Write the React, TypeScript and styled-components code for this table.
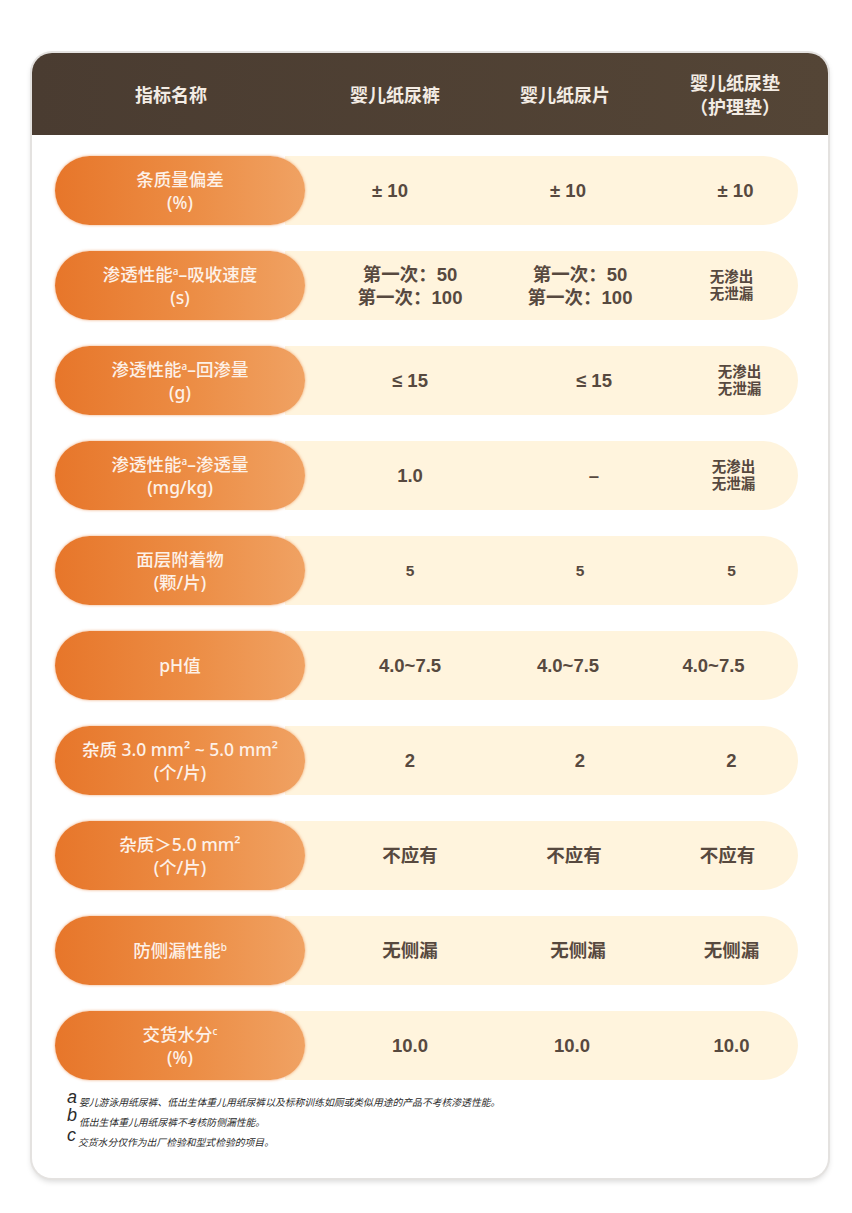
import React from 'react'
import styled, { createGlobalStyle } from 'styled-components'

const GlobalStyle = createGlobalStyle`
  html, body {
    margin: 0;
    padding: 0;
    background: #ffffff;
  }
  body {
    font-family: "Liberation Sans", "Noto Sans CJK SC", sans-serif;
  }
`

// styled
const Page = styled.div`
  width: 852px;
  height: 1213px;
  padding: 53px 24px 0 32px;
  box-sizing: border-box;
`
const Card = styled.div`
  width: 796px;
  height: 1125px;
  border-radius: 20px;
  background: #ffffff;
  box-shadow: 0 0 0 2px #e4e2e0, 0 3px 6px rgba(0, 0, 0, 0.18);
  overflow: hidden;
  display: flex;
  flex-direction: column;
`
const Header = styled.div`
  display: grid;
  grid-template-columns: 278px 170px 170px 170px;
  align-items: center;
  height: 82px;
  background: linear-gradient(90deg, #4a3c31 0%, #544536 100%);
`
const HeadCell = styled.div`
  text-align: center;
  color: #f3ece4;
  font-family: "Noto Sans CJK SC", sans-serif;
  font-weight: 700;
  font-size: 18px;
  line-height: 24px;
`
const Body = styled.div`
  display: flex;
  flex-direction: column;
  gap: 26px;
  padding: 21px 30px 0 23px;
`
const Row = styled.div`
  display: flex;
  height: 69px;
`
const Label = styled.div`
  position: relative;
  z-index: 1;
  width: 250px;
  flex-shrink: 0;
  border-radius: 35px;
  background: linear-gradient(90deg, #e7762a 0%, #ec8d45 55%, #f0a263 100%);
  box-shadow: 0 0 3px rgba(232, 130, 60, 0.7);
  display: flex;
  justify-content: center;
  align-items: center;
`
const LabelText = styled.div`
  color: #fdf1e8;
  font-family: "Noto Sans", "Noto Sans CJK SC", sans-serif;
  font-weight: 500;
  font-size: 17.5px;
  line-height: 23px;
  text-align: center;
  white-space: nowrap;
  sup {
    font-size: 10px;
    line-height: 0;
    vertical-align: 6px;
  }
`
const Bar = styled.div`
  flex: 1;
  margin-left: -20px;
  padding-left: 40px;
  border-radius: 0 35px 35px 0;
  background: #fff4dd;
  display: grid;
  grid-template-columns: 170px 170px 1fr;
  align-items: center;
`
const Value = styled.div<{ size?: number; shift?: number }>`
  text-align: center;
  color: #57493f;
  font-family: "Liberation Sans", "Noto Sans CJK SC", sans-serif;
  font-weight: 700;
  font-size: ${({ size }) => size || 18.5}px;
  line-height: ${({ size }) => (size && size < 16 ? '17px' : '23px')};
  transform: translateX(${({ shift }) => shift || 0}px);
  white-space: nowrap;
`
const Notes = styled.div`
  padding: 14px 0 0 35px;
  display: flex;
  flex-direction: column;
  gap: 4px;
`
const Note = styled.div`
  display: flex;
  align-items: flex-end;
  font-family: "Noto Sans CJK SC", sans-serif;
  font-style: italic;
  font-size: 9.8px;
  color: #2b2b2b;
  line-height: 16px;
`
const NoteMark = styled.span<{ lift: number }>`
  font-family: "Liberation Sans", sans-serif;
  font-style: italic;
  font-size: 18px;
  line-height: 16px;
  margin-right: 2px;
  transform: translateY(-${({ lift }) => lift}px);
  display: inline-block;
`

interface RowData {
  label: React.ReactNode
  values: React.ReactNode[]
  size?: number[]
  shift?: number[]
}

const leak = (
  <>
    无渗出
    <br />
    无泄漏
  </>
)

const rows: RowData[] = [
  {
    label: <>条质量偏差<br />(%)</>,
    values: ['± 10', '± 10', '± 10'],
    shift: [-20, -12, 4],
  },
  {
    label: <>渗透性能<sup>a</sup>–吸收速度<br />(s)</>,
    values: [<>第一次：50<br />第一次：100</>, <>第一次：50<br />第一次：100</>, leak],
    size: [0, 0, 14.5],
  },
  {
    label: <>渗透性能<sup>a</sup>–回渗量<br />(g)</>,
    values: ['≤ 15', '≤ 15', leak],
    size: [0, 0, 14.5],
    shift: [0, 14, 8],
  },
  {
    label: <>渗透性能<sup>a</sup>–渗透量<br />(mg/kg)</>,
    values: ['1.0', '–', leak],
    size: [0, 0, 14.5],
    shift: [0, 14, 2],
  },
  {
    label: <>面层附着物<br />(颗/片)</>,
    values: ['5', '5', '5'],
    size: [15.5, 15.5, 15.5],
  },
  {
    label: <>pH值</>,
    values: ['4.0~7.5', '4.0~7.5', '4.0~7.5'],
    shift: [0, -12, -18],
  },
  {
    label: <>杂质 3.0 mm² ~ 5.0 mm²<br />(个/片)</>,
    values: ['2', '2', '2'],
  },
  {
    label: <>杂质＞5.0 mm²<br />(个/片)</>,
    values: ['不应有', '不应有', '不应有'],
    shift: [0, -6, -4],
  },
  {
    label: <>防侧漏性能<sup>b</sup></>,
    values: ['无侧漏', '无侧漏', '无侧漏'],
    shift: [0, -2, 0],
  },
  {
    label: <>交货水分<sup>c</sup><br />(%)</>,
    values: ['10.0', '10.0', '10.0'],
    shift: [0, -8, 0],
  },
]

function TableRow({ row }: { row: RowData }) {
  return (
    <Row>
      <Label>
        <LabelText>{row.label}</LabelText>
      </Label>
      <Bar>
        {row.values.map((v, i) => (
          <Value key={i} size={row.size?.[i] || undefined} shift={row.shift?.[i]}>
            {v}
          </Value>
        ))}
      </Bar>
    </Row>
  )
}

export default function App() {
  return (
    <>
      <GlobalStyle />
      <Page>
        <Card>
          <Header>
            <HeadCell>指标名称</HeadCell>
            <HeadCell>婴儿纸尿裤</HeadCell>
            <HeadCell>婴儿纸尿片</HeadCell>
            <HeadCell>
              婴儿纸尿垫
              <br />
              （护理垫）
            </HeadCell>
          </Header>
          <Body>
            {rows.map((row, i) => (
              <TableRow key={i} row={row} />
            ))}
          </Body>
          <Notes>
            <Note>
              <NoteMark lift={5}>a</NoteMark>
              婴儿游泳用纸尿裤、低出生体重儿用纸尿裤以及标称训练如厕或类似用途的产品不考核渗透性能。
            </Note>
            <Note>
              <NoteMark lift={7}>b</NoteMark>
              低出生体重儿用纸尿裤不考核防侧漏性能。
            </Note>
            <Note>
              <NoteMark lift={7}>c</NoteMark>
              交货水分仅作为出厂检验和型式检验的项目。
            </Note>
          </Notes>
        </Card>
      </Page>
    </>
  )
}
